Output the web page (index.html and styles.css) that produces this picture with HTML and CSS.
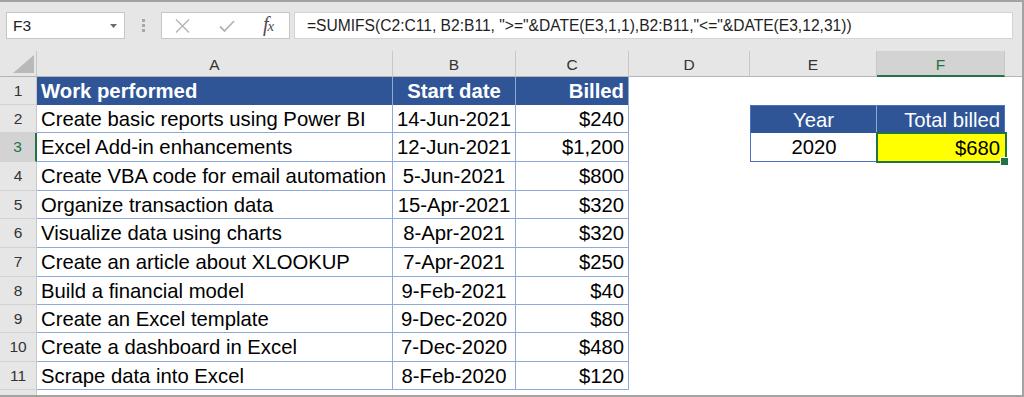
FILE: index.html
```html
<!DOCTYPE html>
<html>
<head>
<meta charset="utf-8">
<link rel="stylesheet" href="styles.css">
</head>
<body>
<div class="frame">
  <div class="fbar">
    <div class="namebox">
      <span class="nb-text">F3</span>
      <svg class="caret" width="7" height="4" viewBox="0 0 7 4"><path d="M0 0H7L3.5 4Z" fill="#6b6b6b"/></svg>
    </div>
    <div class="grip"><i></i><i></i><i></i></div>
    <div class="btnbox">
      <svg class="ico" width="15" height="14" viewBox="0 0 15 14"><path d="M1 0.5L14 13.5M14 0.5L1 13.5" stroke="#b4b4b4" stroke-width="1.4" fill="none"/></svg>
      <svg class="ico" width="16" height="12" viewBox="0 0 16 12"><path d="M1 6.5L5.5 11L15 1" stroke="#b4b4b4" stroke-width="1.8" fill="none"/></svg>
      <span class="fx">f<span class="fx-x">x</span></span>
    </div>
    <div class="formula">=SUMIFS(C2:C11, B2:B11, "&gt;="&amp;DATE(E3,1,1),B2:B11,"&lt;="&amp;DATE(E3,12,31))</div>
  </div>
  <div class="sheet">
    <div class="corner"><svg width="21" height="18" viewBox="0 0 21 18"><path d="M21 0V18H0Z" fill="#b9b9b9"/></svg></div>
    <div class="ch">A</div><div class="ch">B</div><div class="ch">C</div><div class="ch">D</div><div class="ch">E</div><div class="ch ch-sel">F</div><div class="ch ch-end"></div>

    <div class="rh">1</div>
    <div class="c th left">Work performed</div><div class="c th center">Start date</div><div class="c th right">Billed</div>
    <div class="e"></div><div class="e"></div><div class="e"></div><div class="e"></div>

    <div class="rh">2</div>
    <div class="c td left">Create basic reports using Power BI</div><div class="c td center">14-Jun-2021</div><div class="c td right">$240</div>
    <div class="e"></div><div class="c2 th2 e2h center">Year</div><div class="c2 th2 f2h right">Total billed</div><div class="e"></div>

    <div class="rh rh-sel">3</div>
    <div class="c td left">Excel Add-in enhancements</div><div class="c td center">12-Jun-2021</div><div class="c td right">$1,200</div>
    <div class="e"></div><div class="c2 e3 center">2020</div><div class="c2 f3 right">$680</div><div class="e"></div>

    <div class="rh">4</div>
    <div class="c td left">Create VBA code for email automation</div><div class="c td center">5-Jun-2021</div><div class="c td right">$800</div>
    <div class="e"></div><div class="e"></div><div class="e"></div><div class="e"></div>

    <div class="rh">5</div>
    <div class="c td left">Organize transaction data</div><div class="c td center">15-Apr-2021</div><div class="c td right">$320</div>
    <div class="e"></div><div class="e"></div><div class="e"></div><div class="e"></div>

    <div class="rh">6</div>
    <div class="c td left">Visualize data using charts</div><div class="c td center">8-Apr-2021</div><div class="c td right">$320</div>
    <div class="e"></div><div class="e"></div><div class="e"></div><div class="e"></div>

    <div class="rh">7</div>
    <div class="c td left">Create an article about XLOOKUP</div><div class="c td center">7-Apr-2021</div><div class="c td right">$250</div>
    <div class="e"></div><div class="e"></div><div class="e"></div><div class="e"></div>

    <div class="rh">8</div>
    <div class="c td left">Build a financial model</div><div class="c td center">9-Feb-2021</div><div class="c td right">$40</div>
    <div class="e"></div><div class="e"></div><div class="e"></div><div class="e"></div>

    <div class="rh">9</div>
    <div class="c td left">Create an Excel template</div><div class="c td center">9-Dec-2020</div><div class="c td right">$80</div>
    <div class="e"></div><div class="e"></div><div class="e"></div><div class="e"></div>

    <div class="rh">10</div>
    <div class="c td left">Create a dashboard in Excel</div><div class="c td center">7-Dec-2020</div><div class="c td right">$480</div>
    <div class="e"></div><div class="e"></div><div class="e"></div><div class="e"></div>

    <div class="rh">11</div>
    <div class="c td left">Scrape data into Excel</div><div class="c td center">8-Feb-2020</div><div class="c td right">$120</div>
    <div class="e"></div><div class="e"></div><div class="e"></div><div class="e"></div>

    <div class="rh rh-last"></div>
    <div class="e"></div><div class="e"></div><div class="e"></div><div class="e"></div><div class="e"></div><div class="e"></div><div class="e"></div>
  </div>
</div>
</body>
</html>
```
FILE: styles.css
```css
* { box-sizing: border-box; }
html, body { margin: 0; padding: 0; background: #ffffff; }
.frame {
  width: 1024px;
  height: 397px;
  border-top: 2px solid #a3a3a3;
  border-right: 2px solid #a3a3a3;
  border-bottom: 2px solid #a3a3a3;
  background: #e6e6e6;
  display: flex;
  flex-direction: column;
  overflow: hidden;
  font-family: "Liberation Sans", Arial, sans-serif;
}
.fbar {
  height: 49px;
  flex: none;
  display: flex;
  align-items: flex-start;
  padding: 10px 0 0 6px;
  background: #e6e6e6;
}
.namebox {
  width: 119px;
  height: 27px;
  background: #fff;
  border: 1px solid #c6c6c6;
  display: flex;
  align-items: center;
  justify-content: space-between;
  padding: 0 7px 0 6px;
  font-size: 15.5px;
  color: #222;
}
.caret { margin-top: 1px; }
.grip {
  width: 36px;
  height: 27px;
  display: flex;
  flex-direction: column;
  align-items: center;
  justify-content: center;
  gap: 2px;
}
.grip i { display: block; width: 3px; height: 3px; background: #a8a8a8; }
.btnbox {
  width: 129px;
  height: 27px;
  background: #fff;
  border: 1px solid #c6c6c6;
  display: flex;
  align-items: center;
  padding-left: 13px;
}
.btnbox .ico:first-child { margin-right: 29px; }
.btnbox .ico:nth-child(2) { margin-right: 28px; margin-top: 1px; }
.fx {
  font-family: "Liberation Serif", "Times New Roman", serif;
  font-style: italic;
  font-size: 20px;
  color: #4d4d4d;
  letter-spacing: -1px;
  margin-top: -2px;
}
.fx-x { font-size: 15px; }
.formula {
  margin-left: 4px;
  width: 719px;
  height: 27px;
  background: #fff;
  border: 1px solid #d4d4d4;
  display: flex;
  align-items: center;
  padding-left: 12px;
  font-size: 15.6px;
  color: #1e1e1e;
  white-space: nowrap;
}
.sheet {
  flex: 1;
  display: grid;
  grid-template-columns: 37px 356px 123px 113px 121px 127px 128px 1fr;
  grid-template-rows: 26px 28px 28px 29px 29px 28px 29px 29px 28px 28px 29px 28px 1fr;
  background: #fff;
}
.corner {
  background: #e6e6e6;
  border-right: 1px solid #c8c8c8;
  border-bottom: 1px solid #b5b5b5;
  display: flex;
  align-items: flex-end;
  justify-content: flex-end;
  padding: 0 2px 3px 0;
}
.ch {
  background: #e6e6e6;
  border-right: 1px solid #c8c8c8;
  border-bottom: 1px solid #b5b5b5;
  display: flex;
  align-items: center;
  justify-content: center;
  font-size: 15.5px;
  color: #333;
  padding-top: 2px;
}
.ch-sel {
  background: #d3d3d3;
  color: #217346;
  border-bottom: 2px solid #217346;
  padding-top: 3px;
}
.ch-end { border-right: none; background: #e6e6e6; }
.rh {
  background: #e6e6e6;
  border-right: 1px solid #c8c8c8;
  border-bottom: 1px solid #d2d2d2;
  display: flex;
  align-items: center;
  justify-content: center;
  font-size: 15.5px;
  color: #333;
}
.rh-sel {
  background: #d3d3d3;
  color: #217346;
  border-right: 2px solid #217346;
}
.rh-last { border-bottom: none; }
.e { background: #fff; }
.c, .c2 {
  display: flex;
  align-items: center;
  font-size: 20.3px;
  color: #000;
  padding: 1px 4px 0 4px;
  white-space: nowrap;
}
.c { overflow: hidden; }
.left { justify-content: flex-start; }
.center { justify-content: center; }
.right { justify-content: flex-end; }
.th {
  background: #2f5597;
  color: #fff;
  font-weight: bold;
  border-right: 1px solid #8eaadb;
}
.td {
  background: #fff;
  border-right: 1px solid #8eaadb;
  border-bottom: 1px solid #8eaadb;
}
.th2 {
  background: #2f5597;
  color: #fff;
  border-top: 1px solid #4a72c0;
}
.e2h { border-left: 1px solid #4a72c0; border-right: 1px solid #8eaadb; }
.f2h { border-right: 1px solid #4a72c0; }
.e3 {
  background: #fff;
  border-left: 1px solid #4a72c0;
  border-bottom: 1px solid #4a72c0;
}
.f3 {
  background: #ffff00;
  position: relative;
  padding-right: 5px;
}
.f3::after {
  content: "";
  position: absolute;
  left: -1px;
  top: -1px;
  right: -2px;
  bottom: -1px;
  border: 2px solid #217346;
}
.f3::before {
  content: "";
  position: absolute;
  right: -4px;
  bottom: -4px;
  width: 7px;
  height: 7px;
  background: #217346;
  border: 1px solid #fff;
  z-index: 1;
}
```
